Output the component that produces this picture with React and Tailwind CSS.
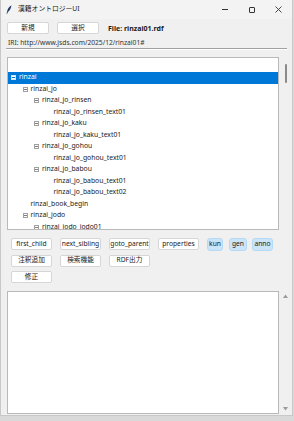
import React from "react";

const rows = [
  { t: "rinzai", l: 0, box: true, sel: true },
  { t: "rinzai_jo", l: 1, box: true },
  { t: "rinzai_jo_rinsen", l: 2, box: true },
  { t: "rinzai_jo_rinsen_text01", l: 3 },
  { t: "rinzai_jo_kaku", l: 2, box: true },
  { t: "rinzai_jo_kaku_text01", l: 3 },
  { t: "rinzai_jo_gohou", l: 2, box: true },
  { t: "rinzai_jo_gohou_text01", l: 3 },
  { t: "rinzai_jo_babou", l: 2, box: true },
  { t: "rinzai_jo_babou_text01", l: 3 },
  { t: "rinzai_jo_babou_text02", l: 3 },
  { t: "rinzai_book_begin", l: 1 },
  { t: "rinzai_jodo", l: 1, box: true },
  { t: "rinzai_jodo_jodo01", l: 2, box: true },
];

const font = { fontFamily: '"Noto Sans", "Noto Sans CJK JP", sans-serif' };

function Btn({ children, w = "w-[41px]" }) {
  return (
    <div
      className={
        "h-[12px] flex items-center justify-center text-[6.7px] leading-none text-[#1a1a1a] rounded-[2px] border bg-white border-[#d6d6d6] " +
        w
      }
    >
      {children}
    </div>
  );
}

function Blue({ children, w }) {
  return (
    <div
      className={
        "h-[13px] flex items-center justify-center text-[6.7px] leading-none rounded-[3px] bg-[#cce4f7] border border-[#b5daf5] text-[#1a1a1a] " +
        w
      }
    >
      {children}
    </div>
  );
}

export default function App() {
  return (
    <div className="w-[294px] h-[421px] bg-[#d9d9d9] overflow-hidden" style={font}>
      <div className="w-[293px] h-[416px] bg-[#f0f0f0] border-l border-r border-b border-[#c8c8c8] flex flex-col">
        {/* Title bar */}
        <div className="h-[19px] bg-[#f3f3f3] flex items-center pl-[5px]">
          <svg width="6" height="9" viewBox="0 0 6 9" className="mr-[6px]">
            <path d="M5.5 0.3 C3 1.5 1.5 4 1 7 L0.5 8.7 L1.3 8.7 L1.7 7.2 C3.5 6 5 3.5 5.5 0.3 Z" fill="#1e3a66" />
          </svg>
          <span className="text-[6.8px] text-[#1a1a1a] leading-none">漢籍オントロジーUI</span>
          <div className="ml-auto flex items-center h-full">
            <div className="w-[27px] flex justify-center">
              <div className="w-[6px] h-[1px] bg-[#333]" />
            </div>
            <div className="w-[27px] flex justify-center">
              <div className="w-[6px] h-[6px] border border-[#333] rounded-[1px]" />
            </div>
            <div className="w-[27px] flex justify-center">
              <svg width="7" height="7" viewBox="0 0 7 7">
                <path d="M0.5 0.5 L6.5 6.5 M6.5 0.5 L0.5 6.5" stroke="#333" strokeWidth="0.9" />
              </svg>
            </div>
          </div>
        </div>

        {/* File row */}
        <div className="flex items-center mt-[3px] pl-[6px] gap-[8px]">
          <Btn w="w-[42px]">新規</Btn>
          <Btn w="w-[42px]">選択</Btn>
          <span className="text-[7px] font-bold text-[#1a1a1a] leading-none ml-[1px]">File: rinzai01.rdf</span>
        </div>

        {/* IRI */}
        <div className="mt-[4px] pl-[7px] h-[10px] flex items-center text-[6.7px] text-[#333] leading-none">
          IRI: http://www.jsds.com/2025/12/rinzai01#
        </div>
        <div className="mx-[5px] h-[1px] bg-[#a0a0a0]" />
        <div className="mx-[5px] h-[1px] bg-white" />

        {/* Tree */}
        <div className="flex mt-[7px] h-[173px]">
          <div className="ml-[6px] w-[272px] h-full bg-white border border-[#b9b9b9] overflow-hidden">
            <div className="h-[14px]" />
            {rows.map((r, i) => (
              <div
                key={i}
                className={
                  "h-[11.5px] flex items-center text-[6.8px] leading-none " +
                  (r.sel ? "bg-[#0078d7] text-white" : "text-[#1a1a1a]")
                }
              >
                <div className="h-full flex items-center" style={{ paddingLeft: 3 + r.l * 11.5 }}>
                  {r.box ? (
                    <div
                      className={
                        "w-[5px] h-[5px] border flex items-center justify-center " +
                        (r.sel ? "bg-white border-[#cfe3f7]" : "border-[#a0a0a0] bg-white")
                      }
                    >
                      <div className={"w-[3px] h-[1px] " + (r.sel ? "bg-[#0078d7]" : "bg-[#808080]")} />
                    </div>
                  ) : (
                    <div className="w-[5px] h-[5px]" />
                  )}
                  <span className="ml-[3px]">{r.t}</span>
                </div>
              </div>
            ))}
          </div>
          <div className="flex-1 flex justify-center pt-[7px]">
            <div className="w-[2px] h-[19px] bg-[#8a8a8a] rounded-full" />
          </div>
        </div>

        {/* Buttons */}
        <div className="mt-[8px] pl-[10px] flex flex-col gap-[4.5px]">
          <div className="flex items-center gap-[8px] h-[12px]">
            <Btn>first_child</Btn>
            <Btn>next_sibling</Btn>
            <Btn>goto_parent</Btn>
            <Btn>properties</Btn>
            <div className="flex items-center gap-[6px]">
              <Blue w="w-[16px]">kun</Blue>
              <Blue w="w-[18px]">gen</Blue>
              <Blue w="w-[21px] -ml-[1px]">anno</Blue>
            </div>
          </div>
          <div className="flex items-center gap-[8px]">
            <Btn>注釈追加</Btn>
            <Btn>検索機能</Btn>
            <Btn>RDF出力</Btn>
          </div>
          <div className="flex items-center gap-[8px]">
            <Btn>修正</Btn>
          </div>
        </div>

        {/* Text area */}
        <div className="flex mt-[8px] flex-1 mb-[1px]">
          <div className="ml-[6px] w-[272px] bg-white border border-[#b9b9b9]" />
          <div className="flex-1 flex flex-col items-center justify-between py-[3px]">
            <svg width="5" height="4" viewBox="0 0 5 4">
              <path d="M0 4 L2.5 0.5 L5 4 Z" fill="#9a9a9a" />
            </svg>
            <svg width="5" height="4" viewBox="0 0 5 4">
              <path d="M0 0 L2.5 3.5 L5 0 Z" fill="#9a9a9a" />
            </svg>
          </div>
        </div>
      </div>
    </div>
  );
}
